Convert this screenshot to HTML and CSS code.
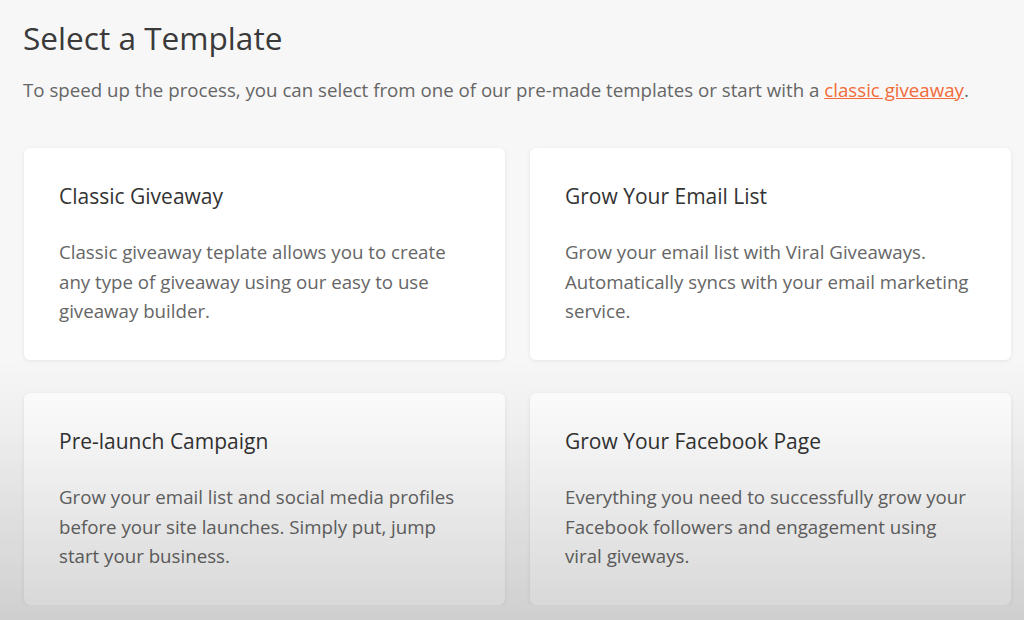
FILE: index.html
```html
<!DOCTYPE html>
<html lang="en">
<head>
  <meta charset="UTF-8">
  <title>Select a Template</title>
  <link rel="stylesheet" href="styles.css">
</head>
<body>
  <div class="page">
    <h1 class="title">Select a Template</h1>
    <p class="intro">To speed up the process, you can select from one of our pre-made templates or start with a <a href="#">classic giveaway</a>.</p>

    <div class="templates">
      <div class="card">
        <h2>Classic Giveaway</h2>
        <p>Classic giveaway teplate allows you to create any type of giveaway using our easy to use giveaway builder.</p>
      </div>
      <div class="card">
        <h2>Grow Your Email List</h2>
        <p>Grow your email list with Viral Giveaways. Automatically syncs with your email marketing service.</p>
      </div>
      <div class="card">
        <h2>Pre-launch Campaign</h2>
        <p>Grow your email list and social media profiles before your site launches. Simply put, jump start your business.</p>
      </div>
      <div class="card">
        <h2>Grow Your Facebook Page</h2>
        <p>Everything you need to successfully grow your Facebook followers and engagement using viral giveways.</p>
      </div>
    </div>
  </div>
  <div class="shade"></div>
</body>
</html>
```

FILE: styles.css
```css
body {
  font-family: 'Open Sans', 'Noto Sans', sans-serif;
  margin: 0;
  padding: 0;
  background-color: #f7f7f7;
  color: #333;
}

.page {
  padding: 17px 14px 0 23px;
}

.title {
  font-size: 31.6px;
  font-weight: 400;
  color: #3a3a3a;
  margin: 0;
  line-height: 42px;
}

.intro {
  font-size: 18.7px;
  color: #666;
  margin: 19px 0 0 0;
  line-height: 24px;
}

.intro a {
  color: #f26b3a;
  text-decoration: underline;
}

.templates {
  display: grid;
  grid-template-columns: 481px 481px;
  column-gap: 25px;
  row-gap: 33px;
  margin-top: 46px;
  margin-left: 1px;
}

.card {
  background-color: #fff;
  border-radius: 6px;
  box-shadow: 0 1px 4px rgba(0,0,0,0.08);
  height: 212px;
  padding: 34px 35px 0 35px;
  box-sizing: border-box;
}

.card h2 {
  font-size: 21px;
  font-weight: 400;
  color: #333;
  margin: 0;
  line-height: 28px;
}

.card p {
  font-size: 18.7px;
  color: #666;
  margin: 27px 0 0 0;
  line-height: 29.5px;
}

/* darkening of the lower half, like in the capture */
.shade {
  position: fixed;
  left: 0;
  right: 0;
  top: 0;
  bottom: 0;
  pointer-events: none;
  background: linear-gradient(to bottom, rgba(0,0,0,0) 0%, rgba(0,0,0,0) 58%, rgba(0,0,0,0.04) 70%, rgba(0,0,0,0.16) 100%);
}
```
